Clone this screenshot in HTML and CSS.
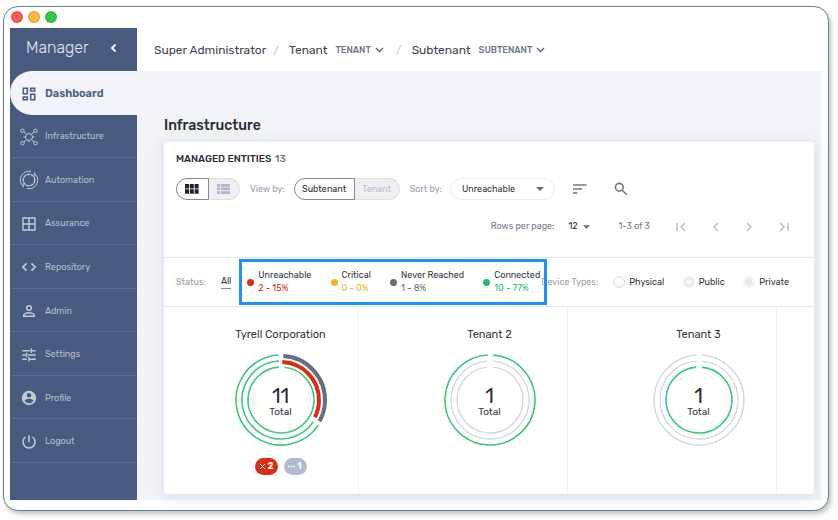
FILE: index.html
```html
<!DOCTYPE html>
<html lang="en">
<head>
<meta charset="utf-8">
<meta name="viewport" content="width=device-width, initial-scale=1">
<title>Manager</title>
<link rel="stylesheet" href="styles.css">
</head>
<body>
<div class="window">
  <div class="titlebar"><span class="dot red"></span><span class="dot amber"></span><span class="dot green"></span></div>
  <div class="app">
    <aside class="sidebar">
      <div class="brand"><span>Manager</span>
        <button class="plain" aria-label="Collapse"><svg width="8" height="10" viewBox="0 0 8 10"><path d="M5.500 1.500 2 5l3.500 3.500" fill="none" stroke="#fff" stroke-width="1.800"/></svg></button>
      </div>
      <nav class="nav">
        <a href="#" class="item active"><svg viewBox="0 0 16 16"><g fill="none" stroke="currentColor" stroke-width="1.600"><path d="M2.300 2.300h4v5.400h-4zM2.300 11h4v2.700h-4zM9.700 2.300h4V5h-4zM9.700 8.300h4v5.400h-4z"/></g></svg>Dashboard</a>
        <a href="#" class="item"><svg viewBox="0 0 20 20" class="wide"><g fill="none" stroke="currentColor" stroke-width="1"><circle cx="10" cy="10" r="3.500"/><circle cx="3.500" cy="3.800" r="1.700"/><circle cx="16.500" cy="3.800" r="1.700"/><circle cx="3.500" cy="16.200" r="1.700"/><circle cx="16.500" cy="16.200" r="1.700"/><path d="M5 5 7.500 7.300M15 5 12.500 7.300M5 15 7.500 12.700M15 15 12.500 12.700M4.500 10h2M13.500 10h2M10 13.500v2"/></g></svg>Infrastructure</a>
        <a href="#" class="item"><svg viewBox="0 0 20 20" class="wide"><g fill="none" stroke="currentColor" stroke-width="1"><circle cx="10" cy="10" r="5.800" stroke-width="1.400" stroke-dasharray="3.500 .6"/><path d="M12 1.500A8.800 8.800 0 0 0 2.500 14.500M8 18.500A8.800 8.800 0 0 0 17.500 5.500M15 3.500l2.500 2M2.500 14.500l2.500 2M15.800 2.500v4M4.200 13.500v4"/></g></svg>Automation</a>
        <a href="#" class="item"><svg viewBox="0 0 16 16"><path d="M2 2h12v12H2zM8 2v12M2 8h12" fill="none" stroke="currentColor" stroke-width="1.400"/></svg>Assurance</a>
        <a href="#" class="item"><svg viewBox="0 0 16 16"><path d="M5.500 4.300 1.900 8l3.600 3.700M10.500 4.300 14.100 8l-3.600 3.700" fill="none" stroke="currentColor" stroke-width="1.700"/></svg>Repository</a>
        <a href="#" class="item"><svg viewBox="0 0 16 16"><g fill="none" stroke="currentColor" stroke-width="1.500"><circle cx="8" cy="5" r="2.300"/><path d="M2.800 13.200v-1c0-1.600 3.200-2.400 5.200-2.400s5.200.8 5.200 2.400v1z"/></g></svg>Admin</a>
        <a href="#" class="item"><svg viewBox="0 0 16 16"><path d="M1.300 3.800h7.500M11 3.800h3.700M10.300 1.600v4.400M1.300 8h3.500M7 8h7.700M5.600 5.800v4.400M1.300 12.200h4.500M8 12.200h6.700M8 10v4.400" fill="none" stroke="currentColor" stroke-width="1.400"/></svg>Settings</a>
        <a href="#" class="item"><svg viewBox="0 0 16 16"><path fill="currentColor" fill-rule="evenodd" d="M8 .8a7.200 7.200 0 1 0 0 14.400A7.200 7.200 0 0 0 8 .8zM8 3a2.300 2.300 0 1 1 0 4.600A2.300 2.300 0 0 1 8 3zM8 13.200a5.200 5.200 0 0 1-4.300-2.300c0-1.400 2.900-2.200 4.300-2.200s4.300.8 4.300 2.200A5.200 5.200 0 0 1 8 13.200z"/></svg>Profile</a>
        <a href="#" class="item"><svg viewBox="0 0 16 16"><path d="M8 1.200v7M4.600 3a6 6 0 1 0 6.800 0" fill="none" stroke="currentColor" stroke-width="1.500"/></svg>Logout</a>
      </nav>
    </aside>
    <div class="content">
      <header class="crumbs">
        <span>Super Administrator</span><span class="slash">/</span>
        <span>Tenant</span><button class="plain scope">TENANT<svg width="9" height="6" viewBox="0 0 9 6"><path d="M1 1l3.500 3.500L8 1" fill="none" stroke="currentColor" stroke-width="1.600"/></svg></button><span class="slash second">/</span>
        <span>Subtenant</span><button class="plain scope">SUBTENANT<svg width="9" height="6" viewBox="0 0 9 6"><path d="M1 1l3.500 3.500L8 1" fill="none" stroke="currentColor" stroke-width="1.600"/></svg></button>
      </header>
      <main>
        <h1>Infrastructure</h1>
        <section class="card">
          <h2>MANAGED ENTITIES <span>13</span></h2>
          <div class="tools">
            <div class="segment icons">
              <button class="on" aria-label="Grid view"><svg width="14" height="10" viewBox="0 0 14 10"><path fill="#20242e" d="M0 0h4v4.500H0zM4.800 0h4v4.500h-4zM9.600 0h4v4.500h-4zM0 5.300h4v4.500H0zM4.800 5.300h4v4.500h-4zM9.600 5.300h4v4.500h-4z"/></svg></button>
              <button aria-label="List view"><svg width="13" height="10" viewBox="0 0 13 10"><path fill="#adb8cc" d="M0 0h3v2.700H0zM3.800 0H13v2.700H3.800zM0 3.600h3v2.700H0zM3.800 3.600H13v2.700H3.800zM0 7.200h3v2.700H0zM3.800 7.200H13v2.700H3.800z"/></svg></button>
            </div>
            <span class="hint">View by:</span>
            <div class="segment words"><button class="on">Subtenant</button><button>Tenant</button></div>
            <label class="hint sortlabel" for="sort">Sort by:</label>
            <span class="picker pill"><select id="sort"><option>Unreachable</option></select><svg width="8" height="4" viewBox="0 0 8 4"><path d="M0 0h8L4 4z" fill="#6b6b6b"/></svg></span>
            <button class="plain order" aria-label="Sort order"><svg width="14" height="10" viewBox="0 0 14 10"><path d="M0 1h13.500M0 5h9M0 9h4.500" stroke="#777" stroke-width="1.500"/></svg></button>
            <button class="plain search" aria-label="Search"><svg width="14" height="14" viewBox="0 0 14 14"><g fill="none" stroke="#777" stroke-width="1.600"><circle cx="5.300" cy="5.300" r="3.900"/><path d="M8.200 8.200l4.600 4.600"/></g></svg></button>
          </div>
          <div class="pager">
            <label for="rows">Rows per page:</label>
            <span class="picker count"><select id="rows"><option>12</option></select><svg width="7" height="4" viewBox="0 0 8 4"><path d="M0 0h8L4 4z" fill="#6b6b6b"/></svg></span>
            <span class="range">1-3 of 3</span>
            <span class="steps">
              <button class="plain" aria-label="First page"><svg width="10" height="10" viewBox="0 0 10 10"><path d="M1 1v8M9 1 5 5l4 4"/></svg></button>
              <button class="plain" aria-label="Previous page"><svg width="6" height="10" viewBox="0 0 6 10"><path d="M5 1 1 5l4 4"/></svg></button>
              <button class="plain" aria-label="Next page"><svg width="6" height="10" viewBox="0 0 6 10"><path d="M1 1l4 4-4 4"/></svg></button>
              <button class="plain" aria-label="Last page"><svg width="10" height="10" viewBox="0 0 10 10"><path d="M1 1l4 4-4 4M9 1v8"/></svg></button>
            </span>
          </div>
          <div class="filters">
            <span class="hint">Status:</span><a href="#" class="all">All</a>
            <div class="legend">
              <div class="state unreachable"><i></i><div>Unreachable<b>2 - 15%</b></div></div>
              <div class="state critical"><i></i><div>Critical<b>0 - 0%</b></div></div>
              <div class="state never"><i></i><div>Never Reached<b>1 - 8%</b></div></div>
              <div class="state connected"><i></i><div>Connected<b>10 - 77%</b></div></div>
            </div>
            <span class="hint types">Device Types:</span>
            <div class="radios">
              <label><input type="radio" name="physical" class="r1">Physical</label>
              <label><input type="radio" name="public" class="r2">Public</label>
              <label><input type="radio" name="private" class="r3">Private</label>
            </div>
          </div>
          <div class="tiles">
            <article>
              <h3>Tyrell Corporation</h3>
              <div class="ring">
                <svg viewBox="0 0 96 96">
                  <g class="g"><circle cx="48" cy="48" r="45" pathLength="360" stroke-dasharray="233 360" transform="rotate(34 48 48)"/><circle cx="48" cy="48" r="39" pathLength="360" stroke-dasharray="233 360" transform="rotate(34 48 48)"/><circle cx="48" cy="48" r="33" pathLength="360" stroke-dasharray="350 360" transform="rotate(-84 48 48)"/></g>
                  <circle cx="48" cy="48" r="44" pathLength="360" stroke="#656d80" stroke-width="4" stroke-dasharray="116 360" transform="rotate(-87 48 48)"/>
                  <circle cx="48" cy="48" r="38" pathLength="360" stroke="#dc2c12" stroke-width="4" stroke-dasharray="115 360" transform="rotate(-88 48 48)"/>
                </svg>
                <p><strong>11</strong>Total</p>
              </div>
              <div class="badges">
                <span class="badge bad"><svg width="7" height="7" viewBox="0 0 7 7"><path d="M1 1l5 5M6 1 1 6" stroke="#fff" stroke-width="1"/></svg>2</span>
                <span class="badge idle"><svg width="7" height="7" viewBox="0 0 7 7"><path d="M0 3.500h1.600M2.700 3.500h1.600M5.400 3.500H7" stroke="#fff" stroke-width="1.500"/></svg>1</span>
              </div>
            </article>
            <article>
              <h3>Tenant 2</h3>
              <div class="ring">
                <svg viewBox="0 0 96 96">
                  <g class="n"><circle cx="48" cy="48" r="39" pathLength="360" stroke-dasharray="352 360" transform="rotate(-86 48 48)"/><circle cx="48" cy="48" r="33" pathLength="360" stroke-dasharray="350 360" transform="rotate(-85 48 48)"/></g>
                  <g class="g"><circle cx="48" cy="48" r="45" pathLength="360" stroke-dasharray="353 360" transform="rotate(-86 48 48)"/></g>
                </svg>
                <p><strong>1</strong>Total</p>
              </div>
            </article>
            <article>
              <h3>Tenant 3</h3>
              <div class="ring">
                <svg viewBox="0 0 96 96">
                  <g class="n"><circle cx="48" cy="48" r="45" pathLength="360" stroke-dasharray="353 360" transform="rotate(-86 48 48)"/><circle cx="48" cy="48" r="39" pathLength="360" stroke-dasharray="352 360" transform="rotate(-86 48 48)"/></g>
                  <g class="g"><circle cx="48" cy="48" r="33" pathLength="360" stroke-dasharray="350 360" transform="rotate(-85 48 48)"/></g>
                </svg>
                <p><strong>1</strong>Total</p>
              </div>
            </article>
          </div>
        </section>
      </main>
    </div>
  </div>
</div>
</body>
</html>
```

FILE: styles.css
```css
* { box-sizing: border-box; }
body {
  margin: 0;
  min-height: 100vh;
  padding: 6px 9px 9px 3px;
  display: flex;
  background: #fff;
  color: #343842;
  font: 9px/13px Rubik, Inter, Roboto, sans-serif;
}
h1, h2, h3, p { margin: 0; }
button, select { font: inherit; color: inherit; }
svg { display: block; }
.plain { border: 0; padding: 0; background: none; }
.window {
  flex: 1;
  display: flex;
  flex-direction: column;
  padding: 0 7px 10px 6px;
  border: 1px solid #638392;
  border-radius: 15px;
  background: #fff;
  box-shadow: 2px 3px 5px rgba(0, 0, 0, .25);
}
.titlebar { height: 21px; display: flex; align-items: center; gap: 5px; padding: 0 0 1px 1px; }
.dot { width: 12px; height: 12px; border-radius: 50%; border: 1px solid rgba(80, 80, 80, .22); }
.red { background: #fc5b57; }
.amber { background: #fdb93b; }
.green { background: #31c748; }
.app { flex: 1; display: flex; }
.sidebar { flex: 0 0 127px; display: flex; flex-direction: column; background: #495a80; }
.brand { height: 43px; display: flex; align-items: center; justify-content: space-between; padding: 0 19px 4px 16px; color: #e3e7ef; font-size: 16px; font-weight: 300; }
.nav { flex: 1; display: grid; grid-template-rows: repeat(9, 1fr); padding-bottom: 37px; }
.item { display: flex; align-items: center; gap: 8px; padding: 2px 0 0 11px; border-bottom: 1px solid #596b8e; color: #b4bdcf; text-decoration: none; }
.item svg { width: 16px; height: 16px; }
.item .wide { width: 20px; height: 20px; margin: 0 -2px; }
.item.active { border: 0; border-radius: 22px 0 0 22px; background: #f3f4f9; color: #4c5d83; font-size: 11px; font-weight: 600; }
.item:not(.active) svg { color: #c3cad8; }
.content { flex: 1; min-width: 0; display: flex; flex-direction: column; background: #f3f4f8; }
.crumbs { height: 43px; display: flex; align-items: center; padding: 1px 0 0 17px; background: #fff; color: #40444d; font-size: 12px; white-space: nowrap; }
.slash { margin: 0 10px 0 7px; color: #c5c8ce; }
.slash.second { margin-left: 12px; }
.scope { display: flex; align-items: center; gap: 4px; margin-left: 8px; color: #6c7587; font-size: 9px; font-weight: 500; }
main { flex: 1; display: flex; flex-direction: column; padding: 46px 7px 6px 27px; }
h1 { margin-bottom: 7px; color: #292d35; font-size: 14px; line-height: 18px; font-weight: 500; }
.card { flex: 1; display: flex; flex-direction: column; border-radius: 3px; background: #fff; box-shadow: 0 2px 12px 2px rgba(190, 202, 220, .45); }
h2 { padding: 11px 12px 0; color: #292d35; font-size: 10px; line-height: 13px; font-weight: 500; }
h2 span { margin-left: 1px; color: #6c7587; }
.hint { color: #969eae; }
.tools { display: flex; align-items: center; height: 22px; margin: 12px 12px 0; white-space: nowrap; }
.segment { display: flex; width: 64px; height: 22px; margin-right: 10px; }
.segment button { flex: 1; display: flex; align-items: center; justify-content: center; padding: 0; border: 1px solid #dddfe5; border-left: 0; border-radius: 0 11px 11px 0; background: #f0f0f3; color: #b6becd; }
.segment .on { border: 1px solid #85888d; border-radius: 11px 0 0 11px; background: #fff; color: #292d35; }
.words { width: 106px; margin-left: 9px; }
.words .on { flex: 0 0 61px; }
.sortlabel { margin-right: 8px; }
.picker { display: flex; align-items: center; }
.picker select { flex: 1; min-width: 0; padding: 0; border: 0; background: none; appearance: none; }
.pill { width: 105px; height: 22px; padding: 0 10px 0 11px; border: 1px solid #ebecef; border-radius: 11px; }
.order { margin-left: 18px; }
.search { margin-left: 27px; }
.pager { display: flex; justify-content: flex-end; align-items: center; height: 58px; padding: 0 25px 4px 0; border-bottom: 1px solid #e6e8eb; color: #737b8c; }
.count { width: 22px; margin: 0 28px 0 14px; color: #292d35; }
.steps { display: flex; gap: 27px; margin-left: 26px; }
.steps path { fill: none; stroke: #bdbdbd; stroke-width: 1.5px; }
.filters { display: flex; align-items: center; height: 49px; padding: 0 25px 0 12px; border-bottom: 1px solid #e6e8eb; white-space: nowrap; }
.all { margin: 0 8px 0 15px; border-bottom: 1px solid #888; color: #343842; text-decoration: none; }
.legend { position: relative; z-index: 1; flex: 0 0 308px; height: 46px; display: flex; align-items: center; justify-content: space-between; padding: 0 4px 0 5px; border: 3px solid #1e90ff; }
.state { display: flex; align-items: center; gap: 4px; }
.state i { width: 7px; height: 7px; border-radius: 50%; background: currentColor; }
.state div { color: #343842; }
.state b { display: block; font-weight: 400; }
.unreachable, .unreachable b { color: #dc2c12; }
.critical, .critical b { color: #f5b324; }
.never, .never b { color: #656d80; }
.connected, .connected b { color: #25bd6b; }
.types { margin-left: -6px; }
.radios { flex: 1; display: flex; justify-content: space-between; margin-left: 15px; }
.radios label { display: flex; align-items: center; gap: 4px; }
.radios input { appearance: none; width: 12px; height: 12px; margin: 0; border: 1px solid #d5dbe7; border-radius: 50%; background: #fafbfd; }
.radios .r2 { border: 2px solid #f0f2f7; box-shadow: inset 0 0 0 1px #d5dbe7; }
.radios .r3 { border: 3px solid #f1f3f7; box-shadow: inset 0 0 0 2px #dce2ec; }
.tiles { flex: 1; display: grid; grid-template-columns: repeat(3, 1fr); gap: 53px; padding: 0 37px 0 39px; }
.tiles article { display: flex; flex-direction: column; align-items: center; padding-top: 21px; border-right: 1px solid #eff0f2; }
h3 { font-size: 11px; line-height: 14px; font-weight: 400; white-space: nowrap; }
.ring { display: grid; width: 96px; height: 96px; margin-top: 10px; }
.ring svg, .ring p { grid-area: 1 / 1; }
.ring circle { fill: none; }
.ring .g { stroke: #3dc97c; stroke-width: 1.6px; }
.ring .n { stroke: #d2d9e5; stroke-width: 1.4px; }
.ring p { align-self: center; padding-top: 4px; text-align: center; font-size: 10px; line-height: 12px; }
.ring strong { display: block; font-size: 20px; line-height: 20px; font-weight: 400; color: #292d35; }
.badges { display: flex; gap: 6px; margin-top: 10px; }
.badge { display: flex; align-items: center; justify-content: center; gap: 2px; width: 23px; height: 17px; border-radius: 9px; color: #fff; font-weight: 600; }
.bad { background: #dc2c12; }
.idle { background: #b1bbce; }
```
